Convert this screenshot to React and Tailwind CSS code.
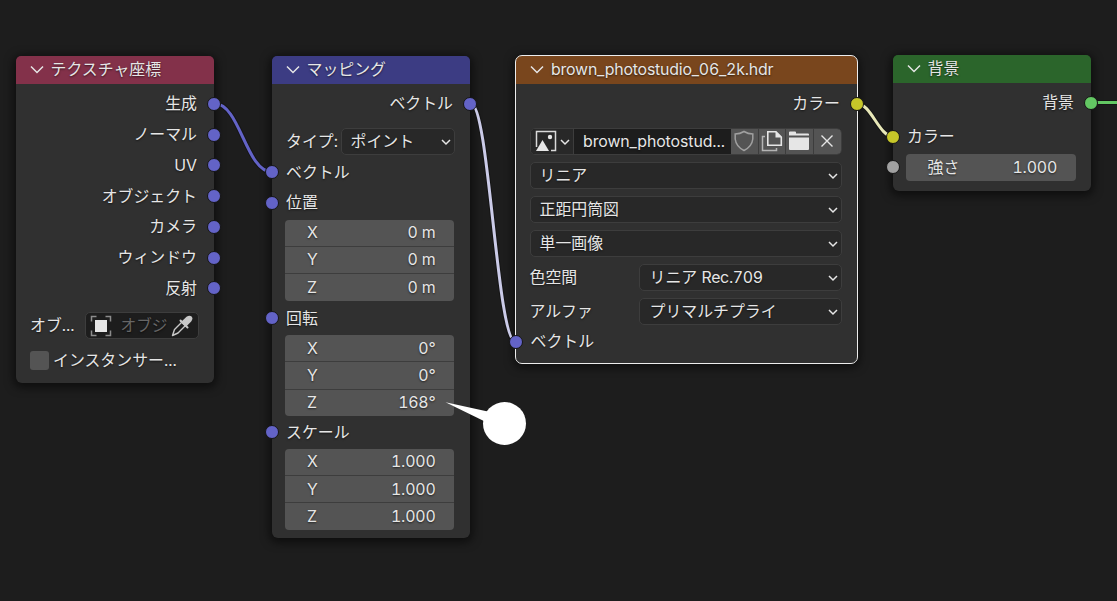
import clsx from "clsx";

const socketColors = {
  vector: "bg-[#6363c7]",
  color: "bg-[#c7c729]",
  shader: "bg-[#63c763]",
  value: "bg-[#a1a1a1]",
};

function Socket({ type = "vector", side }) {
  return (
    <span
      className={clsx(
        "absolute top-1/2 z-20 h-[14px] w-[14px] -translate-y-1/2 rounded-full border border-[#151515]",
        socketColors[type],
        side === "left" ? "-left-[7px]" : "-right-[7px]"
      )}
    />
  );
}

function Node({ title, headerClass, className, children }) {
  return (
    <section
      className={clsx(
        "absolute rounded-[6px] bg-[#303030] shadow-[0_2px_9px_3px_rgba(0,0,0,0.5)]",
        className
      )}
    >
      <header
        className={clsx(
          "flex h-[27.5px] items-center gap-[7px] rounded-t-[5px] pl-[14px]",
          headerClass
        )}
      >
        <svg width="14" height="10" viewBox="0 0 14 10" fill="none" stroke="#e6e6e6" strokeWidth="1.5">
          <path d="M1 1.5L7 7.5L13 1.5" />
        </svg>
        <span>{title}</span>
      </header>
      {children}
    </section>
  );
}

function Output({ label, type }) {
  return (
    <div className="relative flex h-[30.75px] items-center justify-end pr-[17px]">
      {label}
      <Socket type={type} side="right" />
    </div>
  );
}

function Input({ label, type }) {
  return (
    <div className="relative flex h-[30.75px] items-center pl-[14.5px]">
      {label}
      <Socket type={type} side="left" />
    </div>
  );
}

function SmallChevron() {
  return (
    <svg width="10" height="7" viewBox="0 0 10 7" fill="none" stroke="#e6e6e6" strokeWidth="1.5" className="mt-[2px] shrink-0">
      <path d="M1 1L5 5L9 1" />
    </svg>
  );
}

function Dropdown({ value, className }) {
  return (
    <div
      className={clsx(
        "flex h-[27px] items-center justify-between rounded-[5px] border border-[#3d3d3d] bg-[#282828] pl-[9px] pr-[3px]",
        className
      )}
    >
      <span>{value}</span>
      <SmallChevron />
    </div>
  );
}

function VectorFields({ values }) {
  return (
    <div className="ml-[13.5px] mr-4 flex h-[81px] flex-col divide-y divide-[#3d3d3d] overflow-hidden rounded-[4px] bg-[#545454]">
      {["X", "Y", "Z"].map((axis, i) => (
        <div key={axis} className="flex flex-1 items-center justify-between pl-[22px] pr-[18.5px]">
          <span>{axis}</span>
          <span className="tracking-[-0.2px]">{values[i]}</span>
        </div>
      ))}
    </div>
  );
}

function TextureCoordinateNode() {
  const outputs = ["生成", "ノーマル", "UV", "オブジェクト", "カメラ", "ウィンドウ", "反射"];

  return (
    <Node title="テクスチャ座標" headerClass="bg-[#83314a]" className="left-[15.5px] top-14 h-[327px] w-[198.5px]">
      <div className="pt-[5px]">
        {outputs.map((label) => (
          <Output key={label} label={label} />
        ))}
      </div>
      <div className="mt-[8.5px] flex h-[27px] items-center pl-[14.5px]">
        <span className="w-[54.5px]">オブ...</span>
        <div className="flex h-[27px] w-[114px] items-center rounded-[5px] border border-[#3d3d3d] bg-[#1d1d1d] pl-1">
          <svg width="22" height="22" viewBox="0 0 22 22" fill="none" className="shrink-0">
            <path d="M1.5 6.5V1.5H6.5M15.5 1.5H20.5V6.5M20.5 15.5V20.5H15.5M6.5 20.5H1.5V15.5" stroke="#8c8c8c" strokeWidth="1.5" />
            <rect x="5" y="5" width="12" height="12" fill="#e6e6e6" />
          </svg>
          <span className="ml-[9px] whitespace-nowrap text-[15.7px] text-[#666666]">オブジ</span>
          <svg width="22" height="22" viewBox="0 0 22 22" fill="none" className="ml-[3px] shrink-0">
            <path d="M10.5 7.5L3.5 14.5L1.5 20.5L7 18L14 11" stroke="#c8c8c8" strokeWidth="1.4" strokeLinejoin="round" />
            <path d="M9.5 5.5L16.5 12.5" stroke="#c8c8c8" strokeWidth="2" strokeLinecap="round" />
            <path d="M9.8 7.2L15.5 1.8Q18.5 -0.2 20.6 1.5Q22.3 3.5 20.4 6.3L14.8 12Z" fill="#c8c8c8" />
          </svg>
        </div>
      </div>
      <div className="mt-[7.5px] flex h-[27px] items-center gap-[4.5px] pl-[14px]">
        <span className="h-[19px] w-[19px] rounded-[3px] bg-[#545454]" />
        <span>インスタンサー...</span>
      </div>
    </Node>
  );
}

function MappingNode() {
  return (
    <Node title="マッピング" headerClass="bg-[#3c3c83]" className="left-[271.5px] top-14 h-[481.5px] w-[198.5px]">
      <div className="pt-[5px]">
        <Output label="ベクトル" />
      </div>
      <div className="mt-[8.5px] flex h-[27px] items-center pl-[14.5px]">
        <span className="w-[54.5px]">タイプ:</span>
        <Dropdown value="ポイント" className="w-[114px]" />
      </div>
      <div className="mt-[2px]">
        <Input label="ベクトル" />
        <Input label="位置" />
      </div>
      <div className="mt-[1.25px]">
        <VectorFields values={["0 m", "0 m", "0 m"]} />
      </div>
      <div className="mb-[1.5px] mt-[2.25px]">
        <Input label="回転" />
      </div>
      <VectorFields values={["0°", "0°", "168°"]} />
      <div className="my-[1px]">
        <Input label="スケール" />
      </div>
      <VectorFields values={["1.000", "1.000", "1.000"]} />
    </Node>
  );
}

function ImageTextureNode() {
  return (
    <Node
      title={<span className="tracking-[-0.2px]">brown_photostudio_06_2k.hdr</span>}
      headerClass="bg-[#79461d]"
      className="left-[516px] top-14 h-[307px] w-[341px] outline outline-1 outline-[#ededed]"
    >
      <div className="pt-[5px]">
        <Output label="カラー" type="color" />
      </div>
      <div className="ml-[13.5px] mr-[15.5px] mt-[8.5px] flex h-[27px] overflow-hidden rounded-[5px] border border-[#3d3d3d] bg-[#1d1d1d]">
        <div className="flex w-[43px] items-center gap-[3px] border-r border-[#3d3d3d] bg-[#282828] pl-1">
          <svg width="22" height="22" viewBox="0 0 22 22" fill="none">
            <path d="M1.5 17V1.5H20.5V20.5H16" stroke="#d9d9d9" strokeWidth="1.5" />
            <path d="M1 21L7.5 10L14 21Z" fill="#e6e6e6" />
            <circle cx="15" cy="7" r="2.2" fill="#e6e6e6" />
          </svg>
          <SmallChevron />
        </div>
        <span className="flex flex-1 items-center whitespace-nowrap pl-[9.5px] tracking-[-0.1px]">brown_photostud...</span>
        <div className="flex divide-x divide-[#3d3d3d] bg-[#545454]">
          <span className="flex w-[28px] items-center justify-center">
            <svg width="20" height="22" viewBox="0 0 20 22" fill="none" stroke="#a0a0a0" strokeWidth="1.5">
              <path d="M10 1.5Q14 4 18.8 4V9Q18 16.5 10 20.5Q2 16.5 1.2 9V4Q6 4 10 1.5Z" />
            </svg>
          </span>
          <span className="flex w-[27px] items-center justify-center">
            <svg width="22" height="22" viewBox="0 0 22 22" fill="none">
              <path d="M4 6.5H1.5V20.5H15.5V18" stroke="#b4b4b4" strokeWidth="1.5" />
              <path d="M6.8 1.8H15L20.3 7V15.2H6.8Z" stroke="#e6e6e6" strokeWidth="1.6" />
              <path d="M14.5 1.5V7.5H20.5Z" fill="#e6e6e6" />
            </svg>
          </span>
          <span className="flex w-[28px] items-center justify-center">
            <svg width="22" height="22" viewBox="0 0 22 22" fill="#e6e6e6">
              <path d="M1 5.5V2.5Q1 1.5 2 1.5H7Q8 1.5 8 2.5V3.5H20Q21 3.5 21 4.5V5.5Z" />
              <path d="M1 7.5H21V19Q21 20 20 20H2Q1 20 1 19Z" />
            </svg>
          </span>
          <span className="flex w-[27px] items-center justify-center">
            <svg width="12" height="12" viewBox="0 0 12 12" stroke="#e6e6e6" strokeWidth="1.4">
              <path d="M0.5 0.5L11.5 11.5M11.5 0.5L0.5 11.5" />
            </svg>
          </span>
        </div>
      </div>
      <div className="ml-[13.5px] mr-[15.5px] mt-[7px] flex flex-col gap-[7px]">
        <Dropdown value="リニア" />
        <Dropdown value="正距円筒図" />
        <Dropdown value="単一画像" />
        <div className="flex items-center justify-between">
          <span>色空間</span>
          <Dropdown
            value={<>リニア <span className="tracking-[-0.3px]">Rec.709</span></>}
            className="w-[203px] pl-[10px]"
          />
        </div>
        <div className="flex items-center justify-between">
          <span>アルファ</span>
          <Dropdown value="プリマルチプライ" className="w-[203px] pl-[10px]" />
        </div>
      </div>
      <div className="mt-[1.5px]">
        <Input label="ベクトル" />
      </div>
    </Node>
  );
}

function BackgroundNode() {
  return (
    <Node title="背景" headerClass="bg-[#2b652b]" className="left-[892.5px] top-[55px] h-[136px] w-[198.5px]">
      <div className="pt-[5px]">
        <Output label="背景" type="shader" />
      </div>
      <div className="mt-[3px]">
        <Input label="カラー" type="color" />
      </div>
      <div className="relative flex h-[30.75px] items-center pl-[13.5px] pr-[15.5px]">
        <Socket type="value" side="left" />
        <div className="flex h-[27px] flex-1 items-center justify-between rounded-[4px] bg-[#545454] pl-[21.5px] pr-[18.5px]">
          <span>強さ</span>
          <span className="tracking-[-0.2px]">1.000</span>
        </div>
      </div>
    </Node>
  );
}

export default function App() {
  return (
    <main className="relative h-[601px] w-[1117px] overflow-hidden bg-[#1d1d1d] font-['Inter','Noto_Sans_CJK_JP',sans-serif] text-[15.9px] leading-[17px] tabular-nums text-[#e6e6e6] [text-shadow:0_1px_2px_rgba(0,0,0,0.6)]">
      <TextureCoordinateNode />
      <MappingNode />
      <ImageTextureNode />
      <BackgroundNode />

      {/* Links between sockets */}
      <svg className="absolute inset-0 z-10" width="1117" height="601" fill="none">
        <g stroke="#151515" strokeWidth="5">
          <path d="M214.5 103.5C240 103.5 246 172 272 172" />
          <path d="M471 103.5C489 103.5 497 342 515.5 342" />
          <path d="M857 103.5C871 103.5 879 136.5 893 136.5" />
          <path d="M1091 102.5H1117" />
        </g>
        <g strokeWidth="3">
          <path d="M214.5 103.5C240 103.5 246 172 272 172" stroke="#6363c7" />
          <path d="M471 103.5C489 103.5 497 342 515.5 342" stroke="#cbcbe8" />
          <path d="M857 103.5C871 103.5 879 136.5 893 136.5" stroke="#e8e8b8" />
          <path d="M1091 102.5H1117" stroke="#63c763" />
        </g>
      </svg>

      {/* Callout */}
      <svg className="absolute inset-0 z-30" width="1117" height="601" fill="#ffffff">
        <circle cx="504.5" cy="423.5" r="21.5" />
        <path d="M445.5 402.3L490 412V424Z" />
      </svg>
    </main>
  );
}
